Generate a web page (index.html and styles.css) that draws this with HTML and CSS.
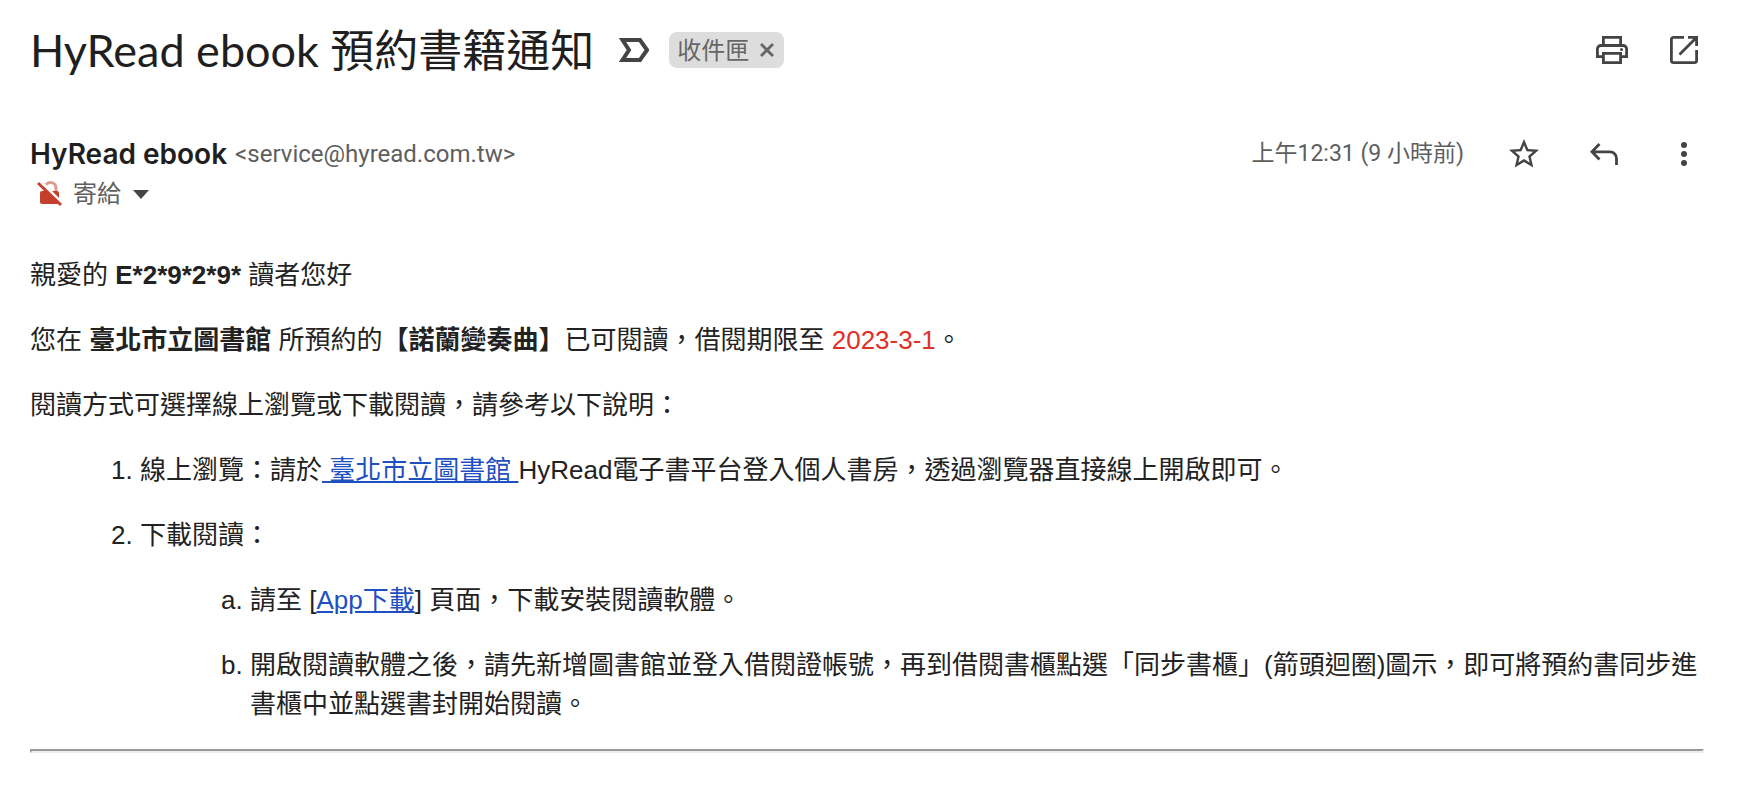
FILE: index.html
```html
<!DOCTYPE html>
<html lang="zh-Hant">

<head>
    <meta charset="UTF-8">
    <meta name="viewport" content="width=device-width, initial-scale=1.0">
    <title>HyRead ebook 預約書籍通知</title>
    <link rel="stylesheet" href="styles.css">
</head>

<body>

    <header class="subject-bar">
        <h1><span class="brand">HyRead ebook</span> 預約書籍通知</h1>
        <button class="importance" type="button" aria-label="重要">
            <svg width="30" height="24" viewBox="0 0 30 24"><path d="M3.5 2H21l7 10-7 10H3.5L10 12z"/></svg>
        </button>
        <span class="label-chip">
            收件匣
            <button type="button" aria-label="移除標籤">
                <svg width="14" height="14" viewBox="0 0 14 14"><path d="M1 1l12 12M13 1L1 13"/></svg>
            </button>
        </span>
        <div class="subject-actions">
            <button class="icon-btn" type="button" aria-label="列印">
                <svg width="32" height="28" viewBox="0 0 32 28"><path d="M7.4 9.5V1.4h17.2v8.1M7.4 20.6h-6V13a3.5 3.5 0 0 1 3.5-3.5h22.2a3.5 3.5 0 0 1 3.5 3.5v7.6h-6M7.4 17.4h17.2v9.2H7.4z"/><circle class="solid" cx="25.5" cy="13.5" r="1.5"/></svg>
            </button>
            <button class="icon-btn" type="button" aria-label="在新視窗中開啟">
                <svg width="28" height="28" viewBox="0 0 28 28"><path d="M14 1.4H3.4a2 2 0 0 0-2 2v21.2a2 2 0 0 0 2 2h21.2a2 2 0 0 0 2-2V14M18 1.4h8.6V10M9.5 18.5L26 2"/></svg>
            </button>
        </div>
    </header>

    <section class="sender">
        <div class="sender-row">
            <span class="sender-name">HyRead ebook</span>
            <span class="sender-mail">&lt;service@hyread.com.tw&gt;</span>
            <div class="sender-actions">
                <span class="date">上午12:31 (9 小時前)</span>
                <button class="icon-btn" type="button" aria-label="加上星號">
                    <svg width="36" height="36" viewBox="0 0 24 24"><path class="solid" d="M22 9.24l-7.19-.62L12 2 9.19 8.63 2 9.24l5.46 4.73L5.82 21 12 17.27 18.18 21l-1.63-7.03L22 9.24zM12 15.4l-3.76 2.27 1-4.28-3.32-2.88 4.38-.38L12 6.1l1.71 4.04 4.38.38-3.32 2.88 1 4.28L12 15.4z"/></svg>
                </button>
                <button class="icon-btn" type="button" aria-label="回覆">
                    <svg width="28" height="22" viewBox="0 0 28 22"><path d="M9.5 1L1.9 8.8l7.6 7.8M2 8.8h18a6.5 6.5 0 0 1 6.5 6.5V22"/></svg>
                </button>
                <button class="icon-btn" type="button" aria-label="更多">
                    <svg width="6" height="24" viewBox="0 0 6 24"><circle class="solid" cx="3" cy="3" r="3"/><circle class="solid" cx="3" cy="12" r="3"/><circle class="solid" cx="3" cy="21" r="3"/></svg>
                </button>
            </div>
        </div>
        <div class="recipient-row">
            <svg class="no-lock" width="26" height="26" viewBox="0 0 26 26">
                <path class="shackle" d="M8 11V7a5.5 5.5 0 0 1 11 0v4"/>
                <rect x="3" y="10" width="19" height="13" rx="2"/>
                <path class="gap" d="M3 0l23 23"/>
                <path class="slash" d="M1 2l23 22"/>
            </svg>
            <span>寄給</span>
            <button class="details" type="button" aria-label="顯示詳細資料">
                <svg width="16" height="9" viewBox="0 0 16 9"><path class="solid" d="M0 0h16L8 9z"/></svg>
            </button>
        </div>
    </section>

    <main class="message">
        <p>親愛的 <strong>E*2*9*2*9*</strong> 讀者您好</p>
        <p>您在 <strong>臺北市立圖書館</strong> 所預約的<strong>【諾蘭變奏曲】</strong>已可閱讀，借閱期限至 <span class="due">2023-3-1</span>。</p>
        <p>閱讀方式可選擇線上瀏覽或下載閱讀，請參考以下說明：</p>
        <ol>
            <li>線上瀏覽：請於<a href="#"> 臺北市立圖書館 </a>HyRead電子書平台登入個人書房，透過瀏覽器直接線上開啟即可。</li>
            <li>下載閱讀：
                <ol class="steps">
                    <li>請至 [<a href="#">App下載</a>] 頁面，下載安裝閱讀軟體。</li>
                    <li>開啟閱讀軟體之後，請先新增圖書館並登入借閱證帳號，再到借閱書櫃點選「同步書櫃」(箭頭迴圈)圖示，即可將預約書同步進書櫃中並點選書封開始閱讀。</li>
                </ol>
            </li>
        </ol>
        <hr>
    </main>

</body>

</html>
```
FILE: styles.css
```css
/* Page */
body {
    margin: 0;
    padding: 20px 36px 30px 30px;
    background: #fff;
    color: #222;
    font-family: 'Liberation Sans', 'Noto Sans CJK TC', sans-serif;
    font-size: 26px;
    line-height: 39px;
}

button {
    display: flex;
    align-items: center;
    justify-content: center;
    padding: 0;
    border: none;
    background: none;
    cursor: pointer;
}

svg {
    display: block;
    flex: none;
    fill: none;
    stroke: #444;
    stroke-width: 2.8;
}

.solid {
    fill: #444;
    stroke: none;
}

.icon-btn {
    width: 40px;
    height: 40px;
}

/* Subject */
.subject-bar {
    display: flex;
    align-items: center;
    height: 60px;
}

h1 {
    margin: 0;
    color: #1f1f1f;
    font-family: Lato, 'Noto Sans CJK TC', sans-serif;
    font-size: 44px;
    font-weight: 400;
    line-height: 58px;
}

.brand {
    font-size: 45px;
}

.importance {
    margin: 0 20px 0 25px;
}

.importance svg {
    stroke-width: 4;
}

.label-chip {
    display: flex;
    align-items: center;
    gap: 11px;
    height: 36px;
    padding: 0 10px 0 8px;
    border-radius: 8px;
    background: #ddd;
    color: #666;
    font-size: 24px;
}

.label-chip svg {
    stroke: #666;
}

.subject-actions {
    display: flex;
    gap: 32px;
    margin-left: auto;
}

/* Sender */
.sender {
    margin-top: 54px;
    color: #5e5e5e;
    font-family: Roboto, 'Noto Sans CJK TC', sans-serif;
    font-size: 24px;
    line-height: 40px;
}

.sender-row,
.recipient-row {
    display: flex;
    align-items: center;
    height: 40px;
}

.sender-name {
    margin-right: 8px;
    color: #1f1f1f;
    font-family: Inter, sans-serif;
    font-size: 28px;
    font-weight: 600;
}

.date {
    font-size: 23px;
}

.sender-actions {
    display: flex;
    align-items: center;
    gap: 40px;
    margin-left: auto;
}

.recipient-row {
    padding-left: 7px;
}

.no-lock {
    margin-right: 10px;
    fill: #c5402c;
    stroke: #c5402c;
    stroke-width: 0;
}

.no-lock .shackle {
    fill: none;
    stroke: #e0998e;
    stroke-width: 3;
}

.no-lock .gap {
    stroke: #fff;
    stroke-width: 3;
}

.no-lock .slash {
    stroke-width: 3;
}

.details {
    margin-left: 12px;
}

/* Message */
.message {
    margin-top: 42px;
}

.message p,
.message ol,
.message li {
    margin: 0 0 26px;
}

.message ol {
    padding-left: 110px;
}

.message ol.steps {
    margin-top: 26px;
    list-style-type: lower-alpha;
}

.message ol,
.message li:last-child {
    margin-bottom: 0;
}

.message a {
    color: #1f50bf;
}

.due {
    color: #e03126;
}

hr {
    margin: 25px 0 0;
    border: 2px solid #eee;
    border-top-color: #999;
    border-left-color: #999;
}
```
